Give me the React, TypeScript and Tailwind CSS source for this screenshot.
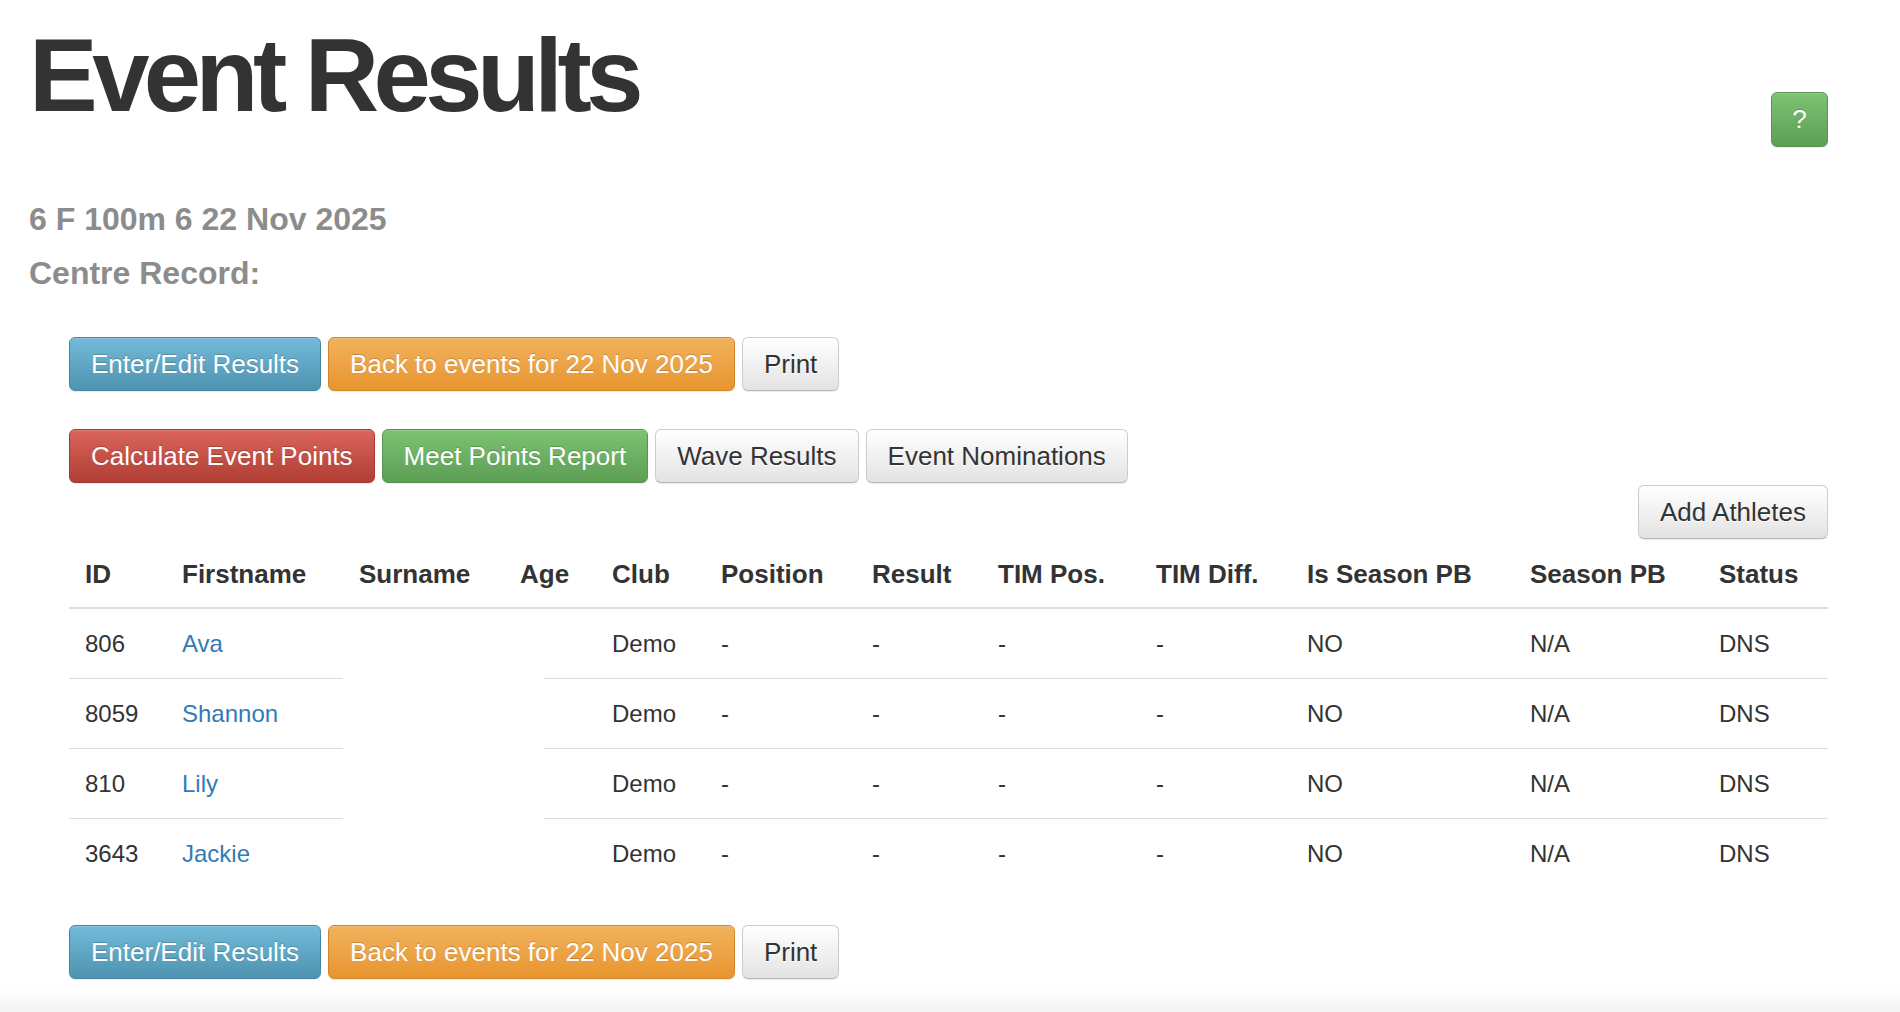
import type { ReactNode } from "react";

type Variant = "info" | "warning" | "default" | "danger" | "success";

const variants: Record<Variant, string> = {
  info: "bg-gradient-to-b from-[#73bada] to-[#4e93b0] border-[#4887a3] text-white [text-shadow:0_-1px_0_rgba(0,0,0,0.2)]",
  warning:
    "bg-gradient-to-b from-[#f1b25b] to-[#e8952d] border-[#d2852a] text-white [text-shadow:0_-1px_0_rgba(0,0,0,0.2)]",
  danger:
    "bg-gradient-to-b from-[#da655c] to-[#b03e35] border-[#a33930] text-white [text-shadow:0_-1px_0_rgba(0,0,0,0.2)]",
  success:
    "bg-gradient-to-b from-[#7dc373] to-[#5c9e55] border-[#569550] text-white [text-shadow:0_-1px_0_rgba(0,0,0,0.2)]",
  default:
    "bg-gradient-to-b from-white to-[#e3e3e3] border-[#cccccc] border-b-[#b8b8b8] text-[#333] [text-shadow:0_1px_0_#fff]",
};

function Btn({ variant = "default", children }: { variant?: Variant; children: ReactNode }) {
  return (
    <button
      className={
        "h-[54px] px-[21px] rounded-[6px] border text-[26px] leading-[34px] whitespace-nowrap shadow-[inset_0_1px_0_rgba(255,255,255,0.15),0_1px_1px_rgba(0,0,0,0.075)] " +
        variants[variant]
      }
    >
      {children}
    </button>
  );
}

function ActionRow() {
  return (
    <div className="flex gap-[7px]">
      <Btn variant="info">Enter/Edit Results</Btn>
      <Btn variant="warning">Back to events for 22 Nov 2025</Btn>
      <Btn>Print</Btn>
    </div>
  );
}

const headers = [
  "ID",
  "Firstname",
  "Surname",
  "Age",
  "Club",
  "Position",
  "Result",
  "TIM Pos.",
  "TIM Diff.",
  "Is Season PB",
  "Season PB",
  "Status",
];

const widths = [
  "w-[97px]",
  "w-[177px]",
  "w-[161px]",
  "w-[92px]",
  "w-[109px]",
  "w-[151px]",
  "w-[126px]",
  "w-[158px]",
  "w-[151px]",
  "w-[223px]",
  "w-[189px]",
  "w-[125px]",
];

const athletes = [
  { id: "806", name: "Ava" },
  { id: "8059", name: "Shannon" },
  { id: "810", name: "Lily" },
  { id: "3643", name: "Jackie" },
];

export default function App() {
  return (
    <div className="min-h-screen bg-white font-['Liberation_Sans',Arial,sans-serif] text-[#333]">
      <div className="pl-[29px] pr-[72px]">
        <div className="flex items-start justify-between">
          <h1 className="pt-[25px] text-[103px] leading-[102px] font-bold tracking-[-0.054em]">
            Event Results
          </h1>
          <button className="mt-[92px] w-[57px] h-[55px] rounded-[6px] border border-[#569550] bg-gradient-to-b from-[#7dc373] to-[#5c9e55] text-white text-[26px] shadow-[inset_0_1px_0_rgba(255,255,255,0.15),0_1px_1px_rgba(0,0,0,0.075)] [text-shadow:0_-1px_0_rgba(0,0,0,0.2)]">
            ?
          </button>
        </div>

        <div className="mt-[52px] text-[32px] leading-[40px] font-bold text-[#8c8c8c]">
          6 F 100m 6 22 Nov 2025
        </div>
        <div className="mt-[14px] text-[32px] leading-[40px] font-bold text-[#8c8c8c]">
          Centre Record:
        </div>

        <div className="pl-[40px]">
          <div className="mt-[44px]">
            <ActionRow />
          </div>

          <div className="mt-[38px] flex gap-[7px]">
            <Btn variant="danger">Calculate Event Points</Btn>
            <Btn variant="success">Meet Points Report</Btn>
            <Btn>Wave Results</Btn>
            <Btn>Event Nominations</Btn>
          </div>

          <div className="mt-[2px] flex justify-end">
            <Btn>Add Athletes</Btn>
          </div>

          <table className="mt-[2px] w-full table-fixed border-separate border-spacing-0">
            <colgroup>
              {widths.map((w, i) => (
                <col key={i} className={w} />
              ))}
            </colgroup>
            <thead>
              <tr>
                {headers.map((h) => (
                  <th
                    key={h}
                    className="h-[68px] px-[16px] py-0 text-left align-middle text-[26px] font-bold whitespace-nowrap border-b-2 border-[#dddddd]"
                  >
                    {h}
                  </th>
                ))}
              </tr>
            </thead>
            <tbody className="text-[24px]">
              {athletes.map((a, i) => {
                const last = i === athletes.length - 1;
                const line = last ? "" : "border-b border-[#dddddd]";
                const cell = "h-[70px] px-[16px] py-0 align-middle whitespace-nowrap";
                return (
                  <tr key={a.id}>
                    <td className={`${cell} ${line}`}>{a.id}</td>
                    <td className={`${cell} ${line}`}>
                      <a href="#" className="text-[#337ab7]">
                        {a.name}
                      </a>
                    </td>
                    <td className={cell}></td>
                    <td
                      className={`${cell} ${
                        last
                          ? ""
                          : "bg-[linear-gradient(#dddddd,#dddddd)] bg-no-repeat bg-[position:right_bottom] bg-[length:52px_1px]"
                      }`}
                    ></td>
                    <td className={`${cell} ${line}`}>Demo</td>
                    <td className={`${cell} ${line}`}>-</td>
                    <td className={`${cell} ${line}`}>-</td>
                    <td className={`${cell} ${line}`}>-</td>
                    <td className={`${cell} ${line}`}>-</td>
                    <td className={`${cell} ${line}`}>NO</td>
                    <td className={`${cell} ${line}`}>N/A</td>
                    <td className={`${cell} ${line}`}>DNS</td>
                  </tr>
                );
              })}
            </tbody>
          </table>

          <div className="mt-[36px] pb-[40px]">
            <ActionRow />
          </div>
        </div>
      </div>

      <div className="pointer-events-none fixed inset-x-0 bottom-0 h-[24px] bg-gradient-to-b from-white/0 to-[#f3f3f3]" />
    </div>
  );
}
